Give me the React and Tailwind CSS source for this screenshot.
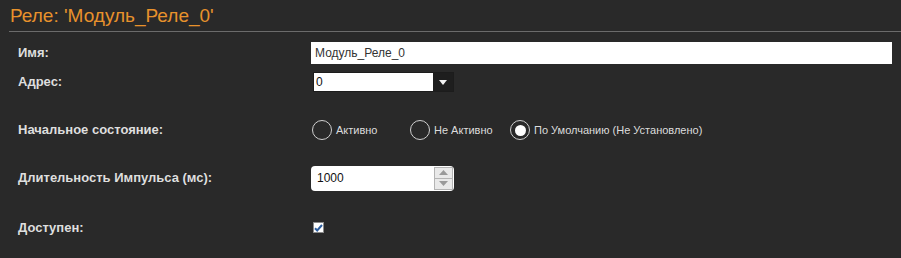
import React from 'react';

const font = { fontFamily: '"Liberation Sans", Arial, sans-serif' };

const Radio = ({ label, checked }) => (
  <label className="flex items-center gap-[4px] text-[11px] text-[#dcdcdc]">
    <span className="w-[20px] h-[20px] rounded-full border-[1.5px] border-[#cfcfcf] flex items-center justify-center">
      {checked && <span className="w-[11px] h-[11px] rounded-full bg-white" />}
    </span>
    {label}
  </label>
);

const Row = ({ label, className, children }) => (
  <div className={`grid grid-cols-[293px_1fr] items-center ${className}`}>
    <div className="text-[13px] font-bold text-[#dedede]">{label}</div>
    <div className="flex items-center">{children}</div>
  </div>
);

export default function App() {
  return (
    <div className="w-[901px] h-[258px] bg-[#292929] overflow-hidden" style={font}>
      <div className="pl-[9px]">
        <h1 className="h-[31px] pl-[1px] pt-[5px] text-[19px] leading-[22px] text-[#e8922c]">
          Реле: 'Модуль_Реле_0'
        </h1>
        <div className="h-px bg-[#6b6b6b]" />
      </div>

      <div className="pl-[18px] pr-[9px]">
        <Row label="Имя:" className="mt-[10px] h-[22px]">
          <input
            readOnly
            value="Модуль_Реле_0"
            className="w-[581px] h-[22px] bg-white px-[4px] text-[12px] text-[#333] outline-none"
          />
        </Row>

        <Row label="Адрес:" className="mt-[8px] h-[19px]">
          <div className="ml-[2px] flex h-[20px] w-[141px] border border-[#1c1c1c]">
            <div className="flex-1 bg-white px-[2px] text-[12px] leading-[18px] text-[#111]">0</div>
            <div className="w-[20px] bg-[#1e1e1e] flex items-center justify-center">
              <svg width="8" height="5" viewBox="0 0 8 5">
                <path d="M0 0h8L4 5z" fill="#f2f2f2" />
              </svg>
            </div>
          </div>
        </Row>

        <Row label="Начальное состояние:" className="mt-[27px] h-[24px]">
          <div className="flex items-center">
            <div className="w-[99px] pl-[1px]"><Radio label="Активно" /></div>
            <div className="w-[100px]"><Radio label="Не Активно" /></div>
            <Radio label="По Умолчанию (Не Установлено)" checked />
          </div>
        </Row>

        <Row label="Длительность Импульса (мс):" className="mt-[23px] h-[26px]">
          <div className="flex h-[25px] w-[143px] rounded-[4px] bg-white pl-[6px] pr-[1px] items-center">
            <span className="flex-1 text-[12px] text-[#111]">1000</span>
            <div className="flex flex-col w-[19px] h-[23px] border border-[#b4b4b4] bg-[#e9e9e9]">
              <div className="flex-1 flex items-center justify-center border-b border-[#b4b4b4]">
                <svg width="9" height="5" viewBox="0 0 9 5"><path d="M0 5h9L4.5 0z" fill="#9a9a9a" /></svg>
              </div>
              <div className="flex-1 flex items-center justify-center">
                <svg width="9" height="5" viewBox="0 0 9 5"><path d="M0 0h9L4.5 5z" fill="#9a9a9a" /></svg>
              </div>
            </div>
          </div>
        </Row>

        <Row label="Доступен:" className="mt-[27px] h-[16px]">
          <div className="ml-[2px] w-[11px] h-[11px] bg-white border border-[#8a8a8a] flex items-center justify-center">
            <svg width="9" height="8" viewBox="0 0 9 8">
              <path d="M1 4.2l2.2 2.3L8 1" stroke="#2c5d9e" strokeWidth="2" fill="none" />
            </svg>
          </div>
        </Row>
      </div>
    </div>
  );
}
